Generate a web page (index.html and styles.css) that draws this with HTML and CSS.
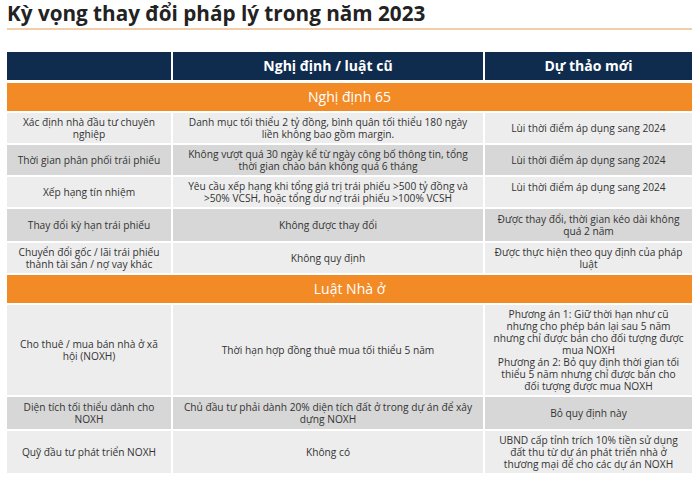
FILE: index.html
```html
<!DOCTYPE html>
<html lang="vi">
<head>
<meta charset="utf-8">
<link rel="stylesheet" href="styles.css">
</head>
<body>
<div class="page">
  <h1 class="title">Kỳ vọng thay đổi pháp lý trong năm 2023</h1>
  <table class="grid">
    <colgroup>
      <col class="c1"><col class="c2"><col class="c3">
    </colgroup>
    <thead>
      <tr class="head">
        <th></th>
        <th>Nghị định / luật cũ</th>
        <th>Dự thảo mới</th>
      </tr>
    </thead>
    <tbody>
      <tr class="section"><td colspan="3">Nghị định 65</td></tr>
      <tr class="light r2l">
        <td>Xác định nhà đầu tư chuyên<br>nghiệp</td>
        <td>Danh mục tối thiểu 2 tỷ đồng, bình quân tối thiểu 180 ngày<br>liền không bao gồm margin.</td>
        <td>Lùi thời điểm áp dụng sang 2024</td>
      </tr>
      <tr class="dark r2l">
        <td>Thời gian phân phối trái phiếu</td>
        <td>Không vượt quá 30 ngày kể từ ngày công bố thông tin, tổng<br>thời gian chào bán không quá 6 tháng</td>
        <td>Lùi thời điểm áp dụng sang 2024</td>
      </tr>
      <tr class="light r2l">
        <td>Xếp hạng tín nhiệm</td>
        <td>Yêu cầu xếp hạng khi tổng giá trị trái phiếu &gt;500 tỷ đồng và<br>&gt;50% VCSH, hoặc tổng dư nợ trái phiếu &gt;100% VCSH</td>
        <td class="top">Lùi thời điểm áp dụng sang 2024</td>
      </tr>
      <tr class="dark r2t">
        <td>Thay đổi kỳ hạn trái phiếu</td>
        <td>Không được thay đổi</td>
        <td>Được thay đổi, thời gian kéo dài không<br>quá 2 năm</td>
      </tr>
      <tr class="light r2l">
        <td>Chuyển đổi gốc / lãi trái phiếu<br>thành tài sản / nợ vay khác</td>
        <td>Không quy định</td>
        <td>Được thực hiện theo quy định của pháp<br>luật</td>
      </tr>
      <tr class="section"><td colspan="3">Luật Nhà ở</td></tr>
      <tr class="light">
        <td>Cho thuê / mua bán nhà ở xã<br>hội (NOXH)</td>
        <td>Thời hạn hợp đồng thuê mua tối thiểu 5 năm</td>
        <td>Phương án 1: Giữ thời hạn như cũ<br>nhưng cho phép bán lại sau 5 năm<br>nhưng chỉ được bán cho đối tượng được<br>mua NOXH<br>Phương án 2: Bỏ quy định thời gian tối<br>thiểu 5 năm nhưng chỉ được bán cho<br>đối tượng được mua NOXH</td>
      </tr>
      <tr class="dark r2t">
        <td>Diện tích tối thiểu dành cho<br>NOXH</td>
        <td>Chủ đầu tư phải dành 20% diện tích đất ở trong dự án để xây<br>dựng NOXH</td>
        <td>Bỏ quy định này</td>
      </tr>
      <tr class="light">
        <td>Quỹ đầu tư phát triển NOXH</td>
        <td>Không có</td>
        <td>UBND cấp tỉnh trích 10% tiền sử dụng<br>đất thu từ dự án phát triển nhà ở<br>thương mại để cho các dự án NOXH</td>
      </tr>
    </tbody>
  </table>
</div>
</body>
</html>
```

FILE: styles.css
```css
* { box-sizing: border-box; }
html, body { margin: 0; padding: 0; background: #ffffff; }
body {
  font-family: "Open Sans", "Noto Sans", "DejaVu Sans", sans-serif;
  color: #333333;
}
.page {
  padding: 1px 8px 0 7px;
}
.title {
  margin: 0;
  font-size: 20.7px;
  line-height: 25px;
  font-weight: 700;
  color: #222222;
  padding-bottom: 2px;
  border-bottom: 2px solid #f1cda9;
}
.grid {
  margin-top: 22px;
  width: 685px;
  border-collapse: separate;
  border-spacing: 0;
  table-layout: fixed;
}
.c1 { width: 166px; }
.c2 { width: 312px; }
.c3 { width: 207px; }
.grid th, .grid td {
  border-right: 2px solid #ffffff;
  border-bottom: 2px solid #ffffff;
  text-align: center;
  vertical-align: middle;
  padding: 3px 4px;
  font-size: 10.2px;
  line-height: 12px;
}
.grid th:last-child, .grid td:last-child { border-right: 0; }
.head th {
  background: #0f2b4d;
  color: #ffffff;
  font-size: 14px;
  line-height: 18px;
  font-weight: 700;
  height: 31px;
  padding-top: 2px;
  border-bottom-width: 3px;
}
.section td {
  background: #f28a26;
  color: #ffffff;
  font-size: 14px;
  line-height: 18px;
  height: 30px;
  padding-bottom: 3px;
}
.light td { background: #ededed; }
.dark td { background: #d7d7d7; }
.r2l td { height: 32px; }
.r2t td { height: 34px; }
.grid td.top { vertical-align: top; padding-top: 4px; }
```
